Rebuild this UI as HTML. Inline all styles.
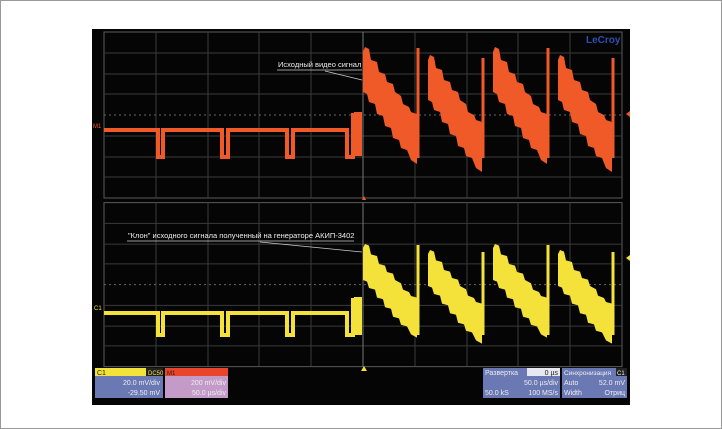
<!DOCTYPE html>
<html><head><meta charset="utf-8"><style>
html,body{margin:0;padding:0;background:#fff;}
body{width:722px;height:429px;overflow:hidden;position:relative;font-family:"Liberation Sans",sans-serif;}
.frame{position:absolute;left:0;top:0;width:720px;height:427px;border:1px solid #999;}
</style></head><body>
<div class="frame"></div>
<svg width="722" height="429" style="position:absolute;left:0;top:0" xmlns="http://www.w3.org/2000/svg">
<defs>
<g id="gridT">
 <rect x="104" y="32" width="518" height="166" fill="none" stroke="#5a5a5a" stroke-width="1"/>
 <g stroke="#3a3a3a" stroke-width="1">
  <line x1="156" y1="32" x2="156" y2="198"/><line x1="208" y1="32" x2="208" y2="198"/><line x1="259" y1="32" x2="259" y2="198"/><line x1="311" y1="32" x2="311" y2="198"/><line x1="415" y1="32" x2="415" y2="198"/><line x1="467" y1="32" x2="467" y2="198"/><line x1="518" y1="32" x2="518" y2="198"/><line x1="570" y1="32" x2="570" y2="198"/>
  <line x1="104" y1="53" x2="622" y2="53"/><line x1="104" y1="74" x2="622" y2="74"/><line x1="104" y1="94" x2="622" y2="94"/><line x1="104" y1="136" x2="622" y2="136"/><line x1="104" y1="157" x2="622" y2="157"/><line x1="104" y1="177" x2="622" y2="177"/>
 </g>
 <line x1="104" y1="115" x2="622" y2="115" stroke="#666" stroke-dasharray="2,3"/>
 <line x1="363" y1="32" x2="363" y2="198" stroke="#777"/>
</g>
<polygon id="burst" points="0,0 2,-5 6,-3 8,8 14,10 16,20 22,22 24,30 30,32 32,40 38,44 40,52 46,55 48,60 54,62 54,112 48,108 44,98 38,96 36,88 30,86 28,76 22,74 20,64 14,62 12,52 6,50 4,42 0,40"/>
</defs>
<rect x="92" y="29" width="538" height="376" fill="#050505"/>
<use href="#gridT"/>
<use href="#gridT" transform="translate(0,171) scale(1,0.988)"/>
<g fill="#f05a28" stroke="#f05a28">
 <polyline fill="none" stroke-width="4" points="104,130 158,130 158,157 163,157 163,130 222,130 222,157 228,157 228,130 287,130 287,157 293,157 293,130 347,130 347,157 353,157 353,113"/>
 <rect x="354" y="112" width="8" height="44" stroke="none"/>
 <g stroke="none">
  <use href="#burst" transform="translate(363,52)"/>
  <use href="#burst" transform="translate(428,60)"/>
  <use href="#burst" transform="translate(493,52)"/>
  <use href="#burst" transform="translate(558,60)"/>
 </g>
 <g stroke-width="3" fill="none">
  <line x1="418" y1="48" x2="418" y2="158"/><line x1="483" y1="58" x2="483" y2="158"/><line x1="548" y1="48" x2="548" y2="158"/><line x1="613" y1="58" x2="613" y2="158"/>
 </g>
</g>
<g fill="#f4e13a" stroke="#f4e13a">
 <polyline fill="none" stroke-width="4" points="104,313 158,313 158,335 163,335 163,313 222,313 222,335 228,335 228,313 287,313 287,335 293,335 293,313 347,313 347,335 353,335 353,298"/>
 <rect x="354" y="297" width="8" height="38" stroke="none"/>
 <g stroke="none">
  <use href="#burst" transform="translate(363,248) scale(1,0.8)"/>
  <use href="#burst" transform="translate(428,254) scale(1,0.8)"/>
  <use href="#burst" transform="translate(493,248) scale(1,0.8)"/>
  <use href="#burst" transform="translate(558,254) scale(1,0.8)"/>
 </g>
 <g stroke-width="3" fill="none">
  <line x1="418" y1="245" x2="418" y2="335"/><line x1="483" y1="252" x2="483" y2="335"/><line x1="548" y1="245" x2="548" y2="335"/><line x1="613" y1="252" x2="613" y2="335"/>
 </g>
</g>
<g font-family="Liberation Sans,sans-serif" font-size="7.5" fill="#eee">
 <text x="278" y="67">Исходный видео сигнал</text>
 <line x1="277" y1="70" x2="362" y2="70" stroke="#ccc" stroke-width="0.7"/>
 <line x1="325" y1="71" x2="362" y2="80" stroke="#ccc" stroke-width="0.7"/>
 <text x="128" y="238">"Клон" исходного сигнала полученный на генераторе АКИП-3402</text>
 <line x1="127" y1="241" x2="354" y2="241" stroke="#ccc" stroke-width="0.7"/>
 <line x1="260" y1="242" x2="362" y2="252" stroke="#ccc" stroke-width="0.7"/>
 <text x="93" y="128" font-size="6" fill="#f05a28">M1</text>
 <text x="94" y="310" font-size="6" fill="#f4e13a">C1</text>
</g>
<text x="586" y="43" font-family="Liberation Sans,sans-serif" font-size="10" font-weight="bold" fill="#2e4fb0">LeCroy</text>
<polygon points="362,200 366,200 364,196" fill="#f05a28"/>
<polygon points="361,371 367,371 364,366" fill="#f4e13a"/>
<polygon points="626,258 630,255 630,261" fill="#f4e13a"/>
<polygon points="626,114 630,111 630,117" fill="#f05a28"/>
<g font-family="Liberation Sans,sans-serif" font-size="7">
 <rect x="95" y="368" width="68" height="8" fill="#f2e23a"/>
 <rect x="146" y="368" width="17" height="8" fill="#222"/>
 <text x="97" y="375" fill="#222">C1</text><text x="148" y="375" fill="#f2e23a" font-size="6">DC50</text>
 <rect x="95" y="376" width="68" height="22" fill="#6a78b4"/>
 <text x="160" y="385" fill="#eee" text-anchor="end">20.0 mV/div</text>
 <text x="160" y="395" fill="#eee" text-anchor="end">-29.50 mV</text>
 <rect x="165" y="368" width="63" height="8" fill="#e8452a"/>
 <text x="167" y="375" fill="#222" font-size="6">M1</text>
 <rect x="165" y="376" width="63" height="22" fill="#c49ac8"/>
 <text x="226" y="385" fill="#eee" text-anchor="end">200 mV/div</text>
 <text x="226" y="395" fill="#eee" text-anchor="end">50.0 µs/div</text>
 <rect x="483" y="368" width="77" height="30" fill="#6a78b4"/>
 <rect x="527" y="368" width="33" height="8" fill="#e8e8f0"/>
 <text x="485" y="375" fill="#eee">Развертка</text><text x="558" y="375" fill="#222" text-anchor="end">0 µs</text>
 <text x="558" y="385" fill="#eee" text-anchor="end">50.0 µs/div</text>
 <text x="485" y="395" fill="#eee">50.0 kS</text><text x="558" y="395" fill="#eee" text-anchor="end">100 MS/s</text>
 <rect x="562" y="368" width="65" height="30" fill="#6a78b4"/>
 <rect x="616" y="368" width="11" height="8" fill="#222"/>
 <text x="564" y="375" fill="#eee" font-size="6.5">Синхронизация</text><text x="617" y="375" fill="#eee" font-size="6">C1</text>
 <text x="564" y="385" fill="#eee">Auto</text><text x="625" y="385" fill="#eee" text-anchor="end">52.0 mV</text>
 <text x="564" y="395" fill="#eee">Width</text><text x="625" y="395" fill="#eee" text-anchor="end">Отриц</text>
</g>
</svg>
</body></html>
